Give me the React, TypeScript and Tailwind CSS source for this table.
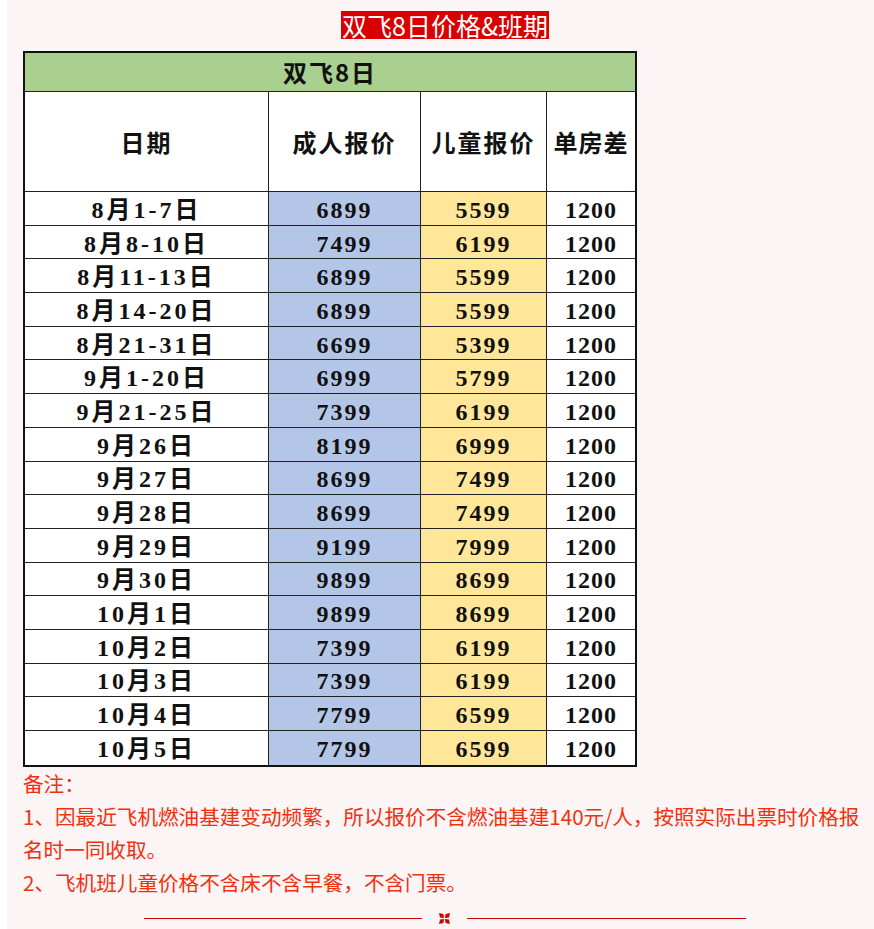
import React from "react";

const rows: [string, string, string][] = [
  ["8月1-7日", "6899", "5599"],
  ["8月8-10日", "7499", "6199"],
  ["8月11-13日", "6899", "5599"],
  ["8月14-20日", "6899", "5599"],
  ["8月21-31日", "6699", "5399"],
  ["9月1-20日", "6999", "5799"],
  ["9月21-25日", "7399", "6199"],
  ["9月26日", "8199", "6999"],
  ["9月27日", "8699", "7499"],
  ["9月28日", "8699", "7499"],
  ["9月29日", "9199", "7999"],
  ["9月30日", "9899", "8699"],
  ["10月1日", "9899", "8699"],
  ["10月2日", "7399", "6199"],
  ["10月3日", "7399", "6199"],
  ["10月4日", "7799", "6599"],
  ["10月5日", "7799", "6599"],
];

const serif = "font-['Liberation_Serif','Noto_Sans_CJK_SC',serif]";
const sans = "font-['Noto_Sans_CJK_SC','Liberation_Sans',sans-serif]";

export default function App() {
  return (
    <div className="w-[874px] min-h-[929px] overflow-hidden bg-white pl-[7px]">
      <div className="min-h-[929px] w-[867px] bg-[#fcf5f5] px-[16px] pb-[10px]">
        <div className="flex justify-center pl-[9px] pt-[11px]">
          <div
            className={`${sans} h-[28px] bg-[#d90000] px-[1px] text-[25px] leading-[28px] text-white`}
          >
            双飞8日价格&amp;班期
          </div>
        </div>

        <div className="mt-[12px] w-[614px] border-2 border-[#111]">
          <div
            className={`${sans} flex h-[39px] items-center justify-center border-b border-[#222] bg-[#a9d08e] text-[24px] font-bold leading-none tracking-[2px] text-[#111]`}
          >
            双飞8日
          </div>
          <div
            className={`${sans} grid h-[100px] grid-cols-[244px_152px_126px_88px] border-b border-[#222] bg-white text-[24px] font-bold leading-none tracking-[2px] text-[#111]`}
          >
            <div className="flex items-center justify-center border-r border-[#222]">日期</div>
            <div className="flex items-center justify-center border-r border-[#222]">成人报价</div>
            <div className="flex items-center justify-center border-r border-[#222]">儿童报价</div>
            <div className="flex items-center justify-center tracking-[1px]">单房差</div>
          </div>
          {rows.map((r, i) => (
            <div
              key={i}
              className={`${serif} grid h-[33.7px] grid-cols-[244px_152px_126px_88px] grid-rows-[100%] overflow-hidden text-[24px] font-bold leading-none tracking-[2px] text-[#111] ${
                i < rows.length - 1 ? "border-b border-[#222]" : ""
              }`}
            >
              <div className="flex items-center justify-center border-r border-[#222] bg-white pt-[3px] tracking-[3px]">
                {r[0]}
              </div>
              <div className="flex items-center justify-center border-r border-[#222] bg-[#b4c6e7] pt-[3px]">
                {r[1]}
              </div>
              <div className="flex items-center justify-center border-r border-[#222] bg-[#ffe699] pt-[3px]">
                {r[2]}
              </div>
              <div className="flex items-center justify-center bg-white pt-[3px] tracking-[1px]">1200</div>
            </div>
          ))}
        </div>

        <div className={`${sans} mr-[-20px] text-[20.6px] leading-[33px] text-[#f2300f]`}>
          <p>备注：</p>
          <p className="whitespace-nowrap">
            1、因最近飞机燃油基建变动频繁，所以报价不含燃油基建140元/人，按照实际出票时价格报
          </p>
          <p>名时一同收取。</p>
          <p>2、飞机班儿童价格不含床不含早餐，不含门票。</p>
        </div>

        <div className="mt-[13px] flex items-center justify-center pl-[9px]">
          <div className="h-px w-[278px] bg-[#c80000]" />
          <svg width="13" height="13" viewBox="0 0 12 12" className="mx-[16px]">
            <path d="M1 1 L5 1.8 L5.6 5.6 L1.8 5 Z" fill="#d40000" />
            <path d="M11 1 L7 1.8 L6.4 5.6 L10.2 5 Z" fill="#d40000" />
            <path d="M1 11 L5 10.2 L5.6 6.4 L1.8 7 Z" fill="#d40000" />
            <path d="M11 11 L7 10.2 L6.4 6.4 L10.2 7 Z" fill="#d40000" />
          </svg>
          <div className="h-px w-[279px] bg-[#c80000]" />
        </div>
      </div>
    </div>
  );
}
